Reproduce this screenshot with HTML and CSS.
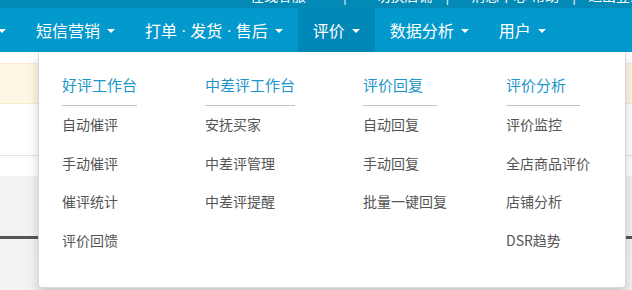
FILE: index.html
```html
<!DOCTYPE html>
<html lang="zh-CN">
<head>
<meta charset="utf-8">
<title>评价</title>
<link rel="stylesheet" href="styles.css">
</head>
<body>
<div class="topbar">
  <div class="topbar-inner">
    <span class="t1">在线客服</span>
    <span class="sep s1">|</span>
    <span class="t2">&lt;</span>
    <span class="t3">切换店铺</span>
    <span class="sep s2">|</span>
    <span class="t4">消息中心</span>
    <span class="t5">帮助</span>
    <span class="sep s3">|</span>
    <span class="t6">退出登录</span>
  </div>
</div>
<nav class="nav">
  <div class="nav-item first"><span class="caret"></span></div>
  <div class="nav-item">短信营销<span class="caret"></span></div>
  <div class="nav-item">打单<span class="dot">·</span>发货<span class="dot">·</span>售后<span class="caret"></span></div>
  <div class="nav-item active">评价<span class="caret"></span></div>
  <div class="nav-item">数据分析<span class="caret"></span></div>
  <div class="nav-item">用户<span class="caret"></span></div>
</nav>
<main class="page">
  <div class="gap-top"></div>
  <div class="alert"></div>
  <div class="white-band"></div>
  <div class="white-band2"></div>
  <div class="gray-band">
    <div class="gray-top"></div>
    <div class="dark-rule"></div>
  </div>
</main>
<div class="dropdown">
  <div class="col">
    <div class="col-head">好评工作台</div>
    <ul class="col-list">
      <li>自动催评</li>
      <li>手动催评</li>
      <li>催评统计</li>
      <li>评价回馈</li>
    </ul>
  </div>
  <div class="col">
    <div class="col-head">中差评工作台</div>
    <ul class="col-list">
      <li>安抚买家</li>
      <li>中差评管理</li>
      <li>中差评提醒</li>
    </ul>
  </div>
  <div class="col">
    <div class="col-head">评价回复</div>
    <ul class="col-list">
      <li>自动回复</li>
      <li>手动回复</li>
      <li>批量一键回复</li>
    </ul>
  </div>
  <div class="col">
    <div class="col-head">评价分析</div>
    <ul class="col-list">
      <li>评价监控</li>
      <li>全店商品评价</li>
      <li>店铺分析</li>
      <li>DSR趋势</li>
    </ul>
  </div>
</div>
</body>
</html>
```
FILE: styles.css
```css
* { box-sizing: border-box; }
html, body {
  margin: 0;
  padding: 0;
  width: 632px;
  height: 290px;
  overflow: hidden;
  background: #ffffff;
  font-family: "Noto Sans CJK SC", "Noto Sans", sans-serif;
}
.topbar {
  height: 8px;
  background: #0289b5;
  overflow: hidden;
}
.topbar-inner {
  display: flex;
  align-items: flex-start;
  white-space: nowrap;
  margin-top: -12px;
  padding-left: 250px;
  font-size: 14px;
  line-height: 14px;
  color: #ffffff;
}
.topbar-inner .s1 { margin-left: 37px; }
.topbar-inner .t2 { margin-left: 12px; }
.topbar-inner .t3 { margin-left: 10px; }
.topbar-inner .s2 { margin-left: 13px; }
.topbar-inner .t4 { margin-left: 22px; }
.topbar-inner .t5 { margin-left: 4px; }
.topbar-inner .s3 { margin-left: 13px; }
.topbar-inner .t6 { margin-left: 12px; }

.nav {
  display: flex;
  height: 44px;
  background: #0399cc;
  white-space: nowrap;
}
.nav-item {
  display: flex;
  align-items: center;
  padding: 1px 15px 0;
  font-size: 16px;
  color: #ffffff;
  line-height: 43px;
}
.nav-item.first {
  margin-left: -2px;
  padding-left: 0;
}
.nav-item.active {
  background: #0288b8;
}
.nav-item .dot {
  font-family: "Liberation Sans", sans-serif;
  margin: 0 4px;
}
.caret {
  display: inline-block;
  width: 0;
  height: 0;
  margin-left: 7px;
  margin-top: 1px;
  border-top: 4px solid #ffffff;
  border-left: 4px solid transparent;
  border-right: 4px solid transparent;
}
.nav-item.first .caret { margin-left: 0; }

.page {
  display: flex;
  flex-direction: column;
}
.gap-top { height: 11px; background: #ffffff; }
.alert {
  height: 41px;
  background: #fcf8e3;
  border-top: 1px solid #faebcc;
  border-bottom: 1px solid #faebcc;
}
.white-band {
  height: 52px;
  background: #ffffff;
  border-bottom: 1px solid #e3e3e3;
}
.white-band2 { height: 20px; background: #ffffff; }
.gray-band {
  height: 120px;
  background: #f3f3f3;
}
.gray-top { height: 60px; }
.dark-rule { height: 3px; background: #555555; }

.dropdown {
  position: absolute;
  top: 52px;
  left: 38px;
  width: 588px;
  height: 236px;
  background: #ffffff;
  border: 1px solid rgba(0, 0, 0, 0.15);
  border-top: none;
  border-radius: 0 0 4px 4px;
  box-shadow: 0 6px 12px rgba(0, 0, 0, 0.175);
  display: grid;
  grid-template-columns: 143px 158px 143px auto;
  padding: 20px 0 0 23px;
  align-items: start;
}
.col-head {
  display: inline-block;
  min-width: 74px;
  font-size: 15px;
  line-height: 20px;
  color: #1b96cb;
  padding-bottom: 10px;
  border-bottom: 1px solid #c4c4c4;
  white-space: nowrap;
}
.col-list {
  list-style: none;
  margin: -1px 0 0;
  padding: 0;
}
.col-list li {
  font-size: 14px;
  line-height: 38.5px;
  color: #555555;
  white-space: nowrap;
}
```
